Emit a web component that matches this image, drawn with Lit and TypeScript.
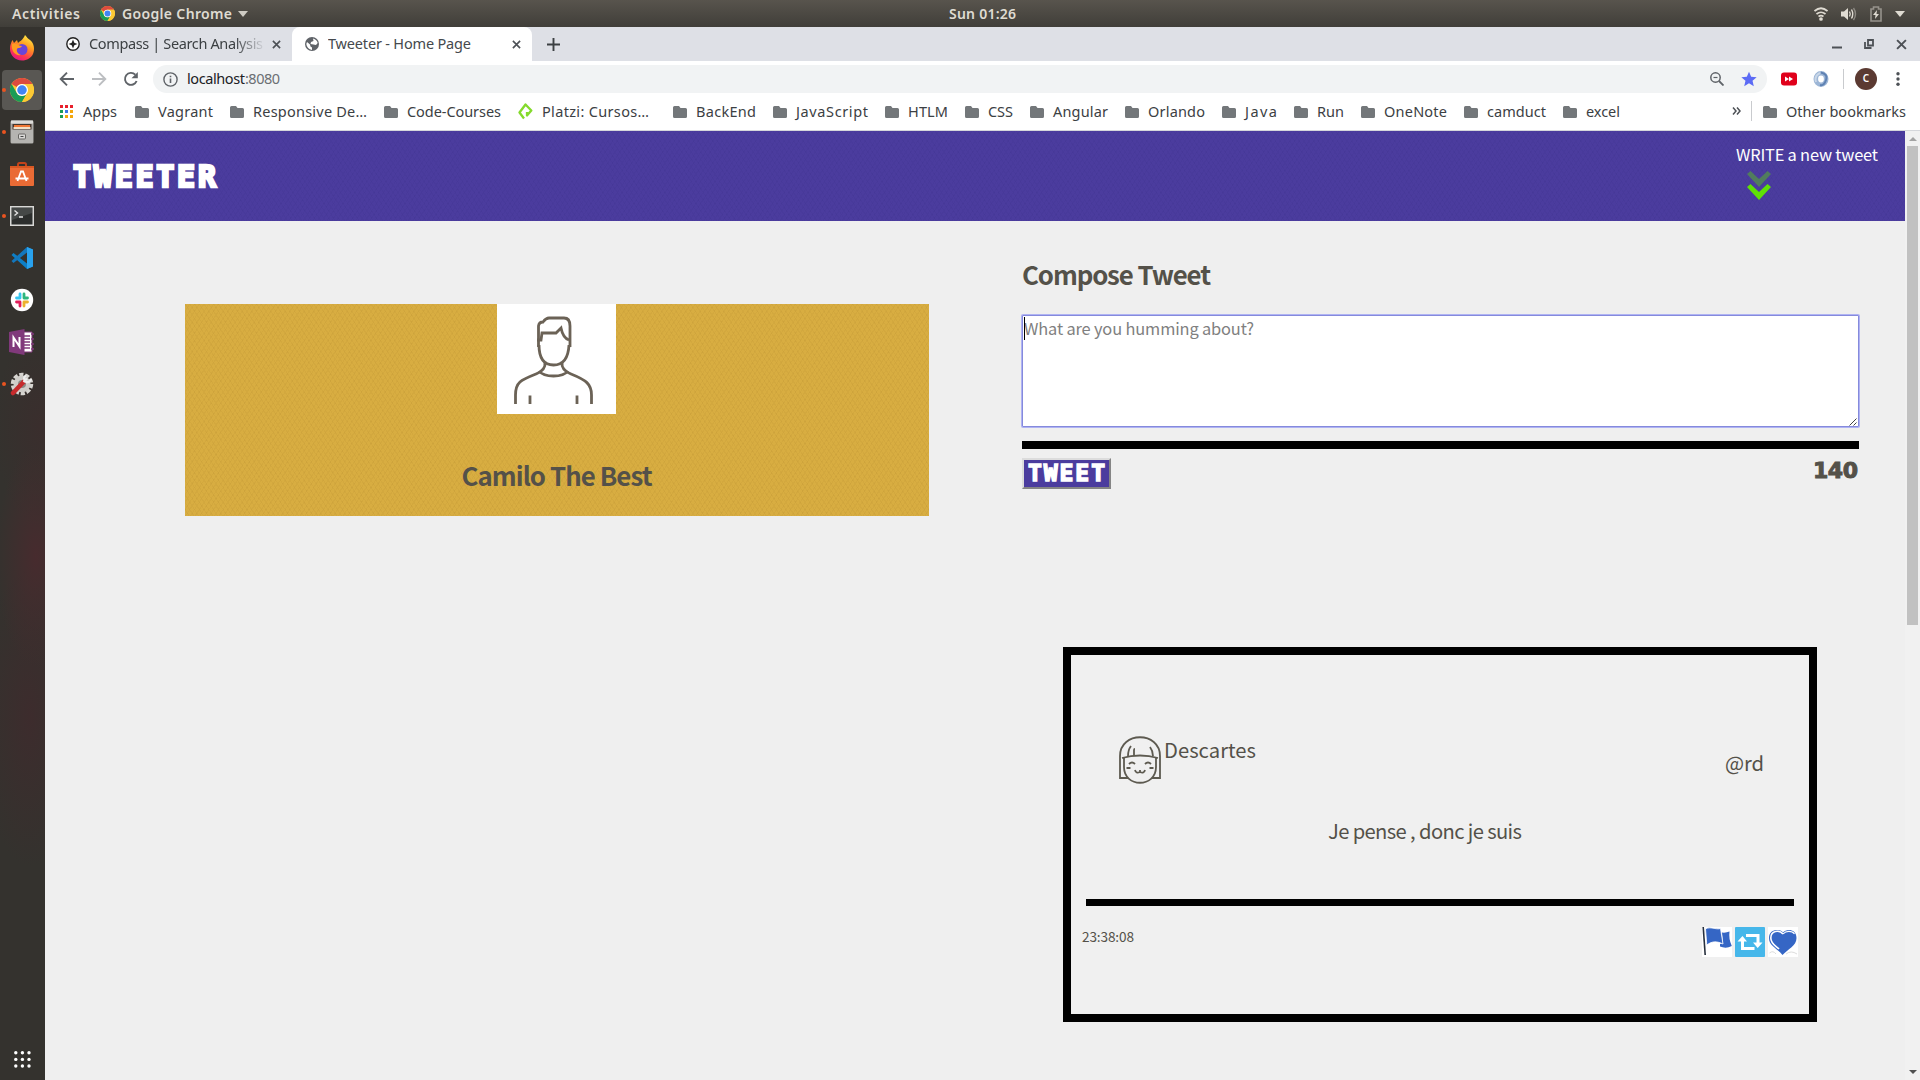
import { LitElement, html, css, svg } from "lit";
import { customElement, property } from "lit/decorators.js";

/** A single line of text whose tracking is adjusted to fill a given width. */
@customElement("fit-text")
class FitText extends LitElement {
  @property() text = "";
  @property({ type: Number }) w = 0;
  static styles = css`
    :host { display: block; white-space: nowrap; flex: none; }
    .line { display: inline-block; white-space: pre; }
  `;
  render() {
    return html`<span class="line">${this.text}</span>`;
  }
  updated() {
    const line = this.renderRoot.querySelector(".line") as HTMLElement;
    line.style.letterSpacing = "0px";
    const natural = line.getBoundingClientRect().width;
    const gaps = Math.max(1, this.text.length - 1);
    line.style.letterSpacing = `${(this.w - natural) / gaps}px`;
    this.style.width = `${this.w}px`;
  }
}

const chromeLogo = (size: number) => html`<svg width=${size} height=${size} viewBox="0 0 48 48">
  <circle cx="24" cy="24" r="24" fill="#fbc934" />
  <path d="M3.2 12A24 24 0 0 1 44.8 12H24A12 12 0 0 0 13.6 18Z" fill="#dd4b3e" />
  <path d="M3.2 12A24 24 0 0 0 24 48L34.4 30A12 12 0 0 1 13.6 30Z" fill="#1a9c57" />
  <path d="M24 12H44.8A24 24 0 0 1 24 48L34.4 30A12 12 0 0 0 24 12Z" fill="#fcc934" />
  <circle cx="24" cy="24" r="12" fill="#fff" />
  <circle cx="24" cy="24" r="9.5" fill="#4285f4" />
</svg>`;

const dock = [
  { dot: false, active: false, art: html`<svg width="26" height="26" viewBox="0 0 26 26">
    <defs>
      <linearGradient id="ff" x1=".8" y1="0" x2=".3" y2="1"><stop offset="0" stop-color="#fff14a" /><stop offset=".4" stop-color="#ff9a1f" /><stop offset=".75" stop-color="#ff3a4d" /><stop offset="1" stop-color="#e31587" /></linearGradient>
    </defs>
    <path d="M16 0C18 2 19 4 21 5C25 8 26 14 24 19C22 23 18 25.500 13 25.500C6 25.500 1 20 1 14C1 10 2 8 3.500 5L5 8L8 5L9 8C11 6 14 5 16 0Z" fill="url(#ff)" />
    <circle cx="13" cy="14.500" r="5.500" fill="#6a45d8" />
    <path d="M3 9C8 7 9 11 13 11C11 14 9 12 8 14C7 16 9 19 12 20C6 21 2 16 3 9Z" fill="#ff9d21" />
  </svg>` },
  { dot: true, active: true, art: chromeLogo(24) },
  { dot: true, active: false, art: html`<svg width="24" height="24" viewBox="0 0 24 24">
    <rect x=".5" y=".5" width="23" height="23" rx="1.500" fill="#aaa9a6" />
    <rect x="1" y=".5" width="22" height="3" fill="#dddcd9" />
    <rect x="2.500" y="4" width="19" height="6" fill="#46372e" />
    <rect x="4" y="5" width="16" height="2" fill="#f27835" /><rect x="3.500" y="7" width="17" height="2" fill="#f2dfc5" />
    <rect x="1" y="9.500" width="22" height="13.500" fill="#b5b4b1" />
    <rect x="8.500" y="14" width="7" height="5" rx="1" fill="#dad9d7" stroke="#686764" /><path d="M10.500 16.500h3" stroke="#444" />
  </svg>` },
  { dot: false, active: false, art: html`<svg width="26" height="26" viewBox="0 0 26 26">
    <path d="M9 6V3.500Q9 2 10.500 2h5Q17 2 17 3.500V6" fill="none" stroke="#c4431a" stroke-width="2" />
    <rect x="1" y="5" width="24" height="20" rx="1" fill="#ea6b35" /><path d="M1 5h24v2H1z" fill="#d95722" />
    <path d="M8.500 20L12 10.500h2L17.500 20M6.500 17.500h13" fill="none" stroke="#fff" stroke-width="1.800" />
  </svg>` },
  { dot: true, active: false, art: html`<svg width="24" height="20" viewBox="0 0 24 20">
    <rect x=".75" y=".75" width="22.500" height="18.500" fill="#2c2e2d" stroke="#d8d8d6" stroke-width="1.500" />
    <path d="M2 2h20v5L2 14z" fill="#454847" />
    <path d="M4.500 4.500l3 2.500-3 2.500M9 11h4" fill="none" stroke="#e4e4e4" stroke-width="1.400" />
  </svg>` },
  { dot: false, active: false, art: html`<svg width="24" height="24" viewBox="0 0 24 24">
    <path d="M17 1L23 3.500V20.500L17 23L1.500 9L3.500 7L17 17.500Z" fill="#0d7fc7" />
    <path d="M17 1L23 3.500V20.500L17 23Z" fill="#29a2ee" />
    <path d="M17 6.500L3.500 17L1.500 15L17 1Z" fill="#1377bd" />
  </svg>` },
  { dot: false, active: false, art: html`<svg width="24" height="24" viewBox="0 0 24 24">
    <circle cx="12" cy="12" r="11.200" fill="#fff" />
    <g fill="none" stroke-width="2.800" stroke-linecap="round">
      <path d="M10 6v4M6.500 10H10" stroke="#36c5f0" /><path d="M14 6v4M14 10h3.500" stroke="#2eb67d" />
      <path d="M14 14v4M14 14h3.500" stroke="#ecb22e" /><path d="M10 14v4M6.500 14H10" stroke="#e01e5a" />
    </g>
  </svg>` },
  { dot: false, active: false, art: html`<svg width="26" height="26" viewBox="0 0 26 26">
    <path d="M14 3h9v20h-9z" fill="#fff" stroke="#80397b" stroke-width="1" /><path d="M15 7h6M15 10h6M15 13h6M15 16h6M15 19h6M22 5h3M22 10h3M22 15h3M22 20h3" stroke="#80397b" stroke-width="1.300" />
    <path d="M0 3L15.500 0V26L0 23Z" fill="#80397b" /><path d="M4.500 18V8.500L10.500 17.500V8" fill="none" stroke="#fff" stroke-width="2" />
  </svg>` },
  { dot: true, active: false, art: html`<svg width="24" height="24" viewBox="0 0 24 24">
    <circle cx="12" cy="12" r="9.500" fill="none" stroke="#d7d5d1" stroke-width="3.500" stroke-dasharray="4.200 1.760" />
    <circle cx="12" cy="12" r="8.500" fill="#cfcdc9" /><circle cx="12" cy="12" r="4" fill="#8b8985" />
    <path d="M3 21L14 9.500" stroke="#c62b2d" stroke-width="4.500" stroke-linecap="round" />
    <path d="M13.500 10L17 6.500M16 3.500A3.500 3.500 0 1 0 21 7" fill="none" stroke="#eee" stroke-width="2.200" />
  </svg>` },
];

const bookmarks: [string, number][] = [
  ["Vagrant", 55], ["Responsive De…", 114], ["Code-Courses", 94], ["Platzi: Cursos…", 107],
  ["BackEnd", 60], ["JavaScript", 72], ["HTLM", 40], ["CSS", 25], ["Angular", 55], ["Orlando", 57],
  ["Java", 32], ["Run", 27], ["OneNote", 63], ["camduct", 59], ["excel", 34],
];

const folder = html`<svg class="folder" width="14" height="14" viewBox="0 0 14 14">
  <path d="M1.500 1H6L7.500 3H12.500Q14 3 14 4.500V11.500Q14 13 12.500 13H1.500Q0 13 0 11.500V2.500Q0 1 1.500 1Z" fill="#73777a" />
</svg>`;
const platzi = html`<svg width="15" height="17" viewBox="0 0 15 17">
  <path d="M6 15.500L1.500 9.500L7.500 1.500L13.300 7.500L9 12.500V9" fill="none" stroke="#84da2c" stroke-width="2.300" stroke-linejoin="round" />
</svg>`;
const cross = (s: number, w: number) => html`<svg width=${s} height=${s} viewBox="0 0 10 10"><path d="M1 1L9 9M9 1L1 9" stroke="#4d5156" stroke-width=${w} /></svg>`;
const dots = (gap: number, size: number, colors: string[]) => svg`${colors.map(
  (c, i) => svg`<rect x=${(i % 3) * gap} y=${Math.floor(i / 3) * gap} width=${size} height=${size} fill=${c} />`
)}`;

@customElement("app-root")
class AppRoot extends LitElement {
  static styles = css`
    :host { display: block; width: 1920px; height: 1080px; overflow: hidden; font-family: "Noto Sans", sans-serif; }
    * { box-sizing: border-box; }
    svg { display: block; flex: none; }
    .desktop { display: grid; grid-template-rows: 27px 1053px; height: 1080px; }

    .topbar { display: grid; grid-template-columns: 949px 1fr auto; align-items: center; background: linear-gradient(#58544d, #403e39); color: #dfdbd2; font-size: 14px; font-weight: 600; line-height: 26px; }
    .menus { display: flex; align-items: center; padding-left: 12px; }
    .menus svg:first-of-type { margin-left: 20px; margin-right: 7px; }
    .menus .caret { margin-left: 6px; }
    .tray { display: flex; align-items: center; padding-right: 15px; gap: 13px; }

    .below { display: grid; grid-template-columns: 45px 1875px; }
    .dock { display: flex; flex-direction: column; background: radial-gradient(40px 110px at 36px 530px, #472b2e, transparent), radial-gradient(50px 150px at 30px 690px, #3d2c2d, transparent), radial-gradient(45px 100px at 40px 400px, #3a2e2d, transparent), #34322e; }
    .slot { display: grid; grid-template-columns: 2px 40px; height: 42px; align-items: center; }
    .tile { display: flex; align-items: center; justify-content: center; height: 40px; border-radius: 4px; position: relative; }
    .tile.active { background: #595753; }
    .tile.dotted::before { content: ""; position: absolute; left: 0; top: 18px; width: 4px; height: 4px; border-radius: 2px; background: #e95420; }
    .launcher { margin: auto 0 12px 14px; }

    .window { display: grid; grid-template-columns: 1875px; grid-template-rows: 34px 36px 34px 949px; background: #fff; color: #3c4043; font-size: 14.500px; }
    .tabs { display: flex; background: #dee0e6; align-items: center; padding-right: 13px; }
    .tab { display: flex; align-items: center; height: 34px; padding-left: 21px; width: 247px; }
    .tab .title { margin-left: 9px; margin-bottom: 2px; width: 174px; overflow: hidden; }
    .tab .close { margin-left: 9px; }
    .fade { -webkit-mask-image: linear-gradient(90deg, #000 145px, transparent 177px); }
    .tab.current { width: 240px; background: #fff; border-radius: 8px 8px 0 0; padding-left: 13px; color: #45494d; }
    .tab.current .title { width: 184px; }
    .tab.current .close { margin-left: 0; }
    .plus { margin-left: 15px; }
    .controls { margin-left: auto; display: flex; gap: 22px; align-items: center; }

    .toolbar { display: flex; align-items: center; padding: 0 17px 0 14px; }
    .nav { display: flex; gap: 16px; width: 94px; flex: none; }
    .omnibox { display: flex; align-items: center; height: 28px; width: 1614px; flex: none; border-radius: 14px; background: #f1f3f4; padding: 0 10px; }
    .omnibox fit-text { margin-bottom: 2px; }
    .omnibox .host { margin-left: 9px; color: #202124; }
    .omnibox .port { color: #6b6f73; }
    .omnibox .tools { margin-left: auto; display: flex; gap: 17px; align-items: center; }
    .extensions { display: flex; align-items: center; margin-left: 14px; gap: 16px; }
    .rule { width: 1px; height: 20px; background: #c9cbce; }
    .extensions .rule { margin-left: -2px; margin-right: -5px; }
    .avatar { width: 22px; height: 22px; border-radius: 50%; background: #5b3a32; color: #fff; font: 600 10px/21px "Noto Sans", sans-serif; text-align: center; }
    .extensions .more { margin-left: -1px; }

    .bookmarks { display: flex; align-items: center; padding: 0 14px 5px 15px; border-bottom: 1px solid #d5d7db; }
    .bookmarks fit-text { margin-bottom: 1px; }
    .apps { display: flex; align-items: center; gap: 10px; margin-right: 18px; }
    .mark { display: flex; align-items: center; gap: 9px; margin-right: 17px; }
    .mark.wide { margin-right: 24px; }
    .mark svg.folder { margin-top: 1px; }
    .overflow { margin-left: auto; display: flex; align-items: center; gap: 10px; }
    .overflow .mark { margin: 0 0 0 1px; }

    .viewport { display: grid; grid-template-columns: 1860px 15px; overflow: hidden; }
    .page { background: #efefef; font-family: "Noto Sans CJK SC", sans-serif; color: #545149; }
    .site { height: 90px; display: flex; justify-content: space-between; padding: 0 27px 0 28px;
      background: repeating-linear-gradient(57deg, transparent 0 3px, rgba(35, 30, 110, 0.06) 3px 4px), repeating-linear-gradient(-57deg, transparent 0 3px, rgba(35, 30, 110, 0.06) 3px 4px), #4b3c9e; }
    .brand { font: 700 30px/92px "DejaVu Sans Mono", monospace; color: #fff; -webkit-text-stroke: 2.600px #fff; }
    .write { padding-top: 10px; font-size: 16.400px; line-height: 26px; color: #fff; width: 142px; }
    .write svg { margin: 4px 0 0 11px; }

    .columns { display: grid; grid-template-columns: 744px 837px; column-gap: 93px; padding-left: 140px; align-items: start; }
    .profile { margin-top: 83px; height: 212px; display: flex; flex-direction: column; align-items: center;
      background: repeating-linear-gradient(57deg, transparent 0 3px, rgba(150, 110, 30, 0.08) 3px 4px), repeating-linear-gradient(-57deg, transparent 0 3px, rgba(150, 110, 30, 0.08) 3px 4px), #d8ad41; }
    .photo { background: #fff; width: 119px; height: 110px; margin-right: 1px; }
    h1 { margin: 0; font-size: 25.800px; line-height: 40px; font-weight: 700; }
    .profile h1 { margin-top: 41px; }
    .compose { padding-top: 33px; }
    .field { position: relative; margin-top: 21px; height: 112px; background: #fff; border: 1px solid #858adc; box-shadow: 0 0 0 1px #afb3f3; border-radius: 1px; padding: 0 1px; color: #808080; font-size: 16.400px; line-height: 24px; }
    .cursor { position: absolute; left: 1px; top: 1px; width: 1px; height: 23px; background: #000; }
    .grip { position: absolute; right: 1px; bottom: 0; }
    .bar { margin-top: 14px; height: 8px; background: #000; }
    .actions { display: flex; justify-content: space-between; margin-top: 9px; height: 31px; }
    .send { width: 89px; height: 31px; border: 2px solid; border-color: #dcdcdc #858585 #858585 #dcdcdc; background: #4b3c9e; color: #fff; padding-left: 4px; font: 700 23px/27px "DejaVu Sans Mono", monospace; -webkit-text-stroke: 1.500px #fff; }
    .count { margin-right: 1px; font: 700 22px/25px "DejaVu Sans", sans-serif; -webkit-text-stroke: 1px #545149; }

    .tweet { margin: 158px 0 0 41px; width: 754px; height: 375px; border: 8px solid #000; display: flex; flex-direction: column; background: #f0f0f0; font-size: 20.200px; line-height: 30px; }
    .author { display: flex; margin: 81px 45px 0 48px; height: 65px; }
    .author .name { margin-left: 3px; margin-top: -1px; }
    .author .handle { margin-left: auto; margin-top: 12px; }
    .words { margin: 15px 0 0 257px; height: 30px; }
    .tweet .line { height: 7px; margin: 53px 15px 0; background: #000; }
    .foot { display: flex; justify-content: space-between; margin: 21px 11px 0; }
    .time { font-size: 13.600px; line-height: 18px; }
    .icons { display: flex; gap: 3px; }

    .scroll { background: #f1f1f1; display: flex; flex-direction: column; align-items: center; }
    .scroll svg:first-child { margin: 6px 0 5px; }
    .thumb { width: 11px; height: 479px; background: #c1c1c1; }
    .scroll svg:last-child { margin: auto 0 6px; }
  `;

  render() {
    return html`<div class="desktop">
      <div class="topbar">
        <div class="menus">
          <fit-text text="Activities" w="68"></fit-text>${chromeLogo(15)}
          <fit-text text="Google Chrome" w="110"></fit-text>
          <svg class="caret" width="10" height="6" viewBox="0 0 10 6"><path d="M0 0h10L5 6z" fill="#cfccc4" /></svg>
        </div>
        <fit-text text="Sun 01:26" w="67"></fit-text>
        <div class="tray">
          <svg width="14" height="14" viewBox="0 0 14 14" fill="none" stroke="#dfdbd2" stroke-width="1.700"><path d="M.5 4Q7-1.500 13.500 4M2.500 7Q7 3.500 11.500 7M4.500 9.500Q7 7.800 9.500 9.500" /><circle cx="7" cy="12" r="1" fill="#dfdbd2" /></svg>
          <svg width="16" height="14" viewBox="0 0 16 14" fill="none"><path d="M0 4.500h3L7 1v12L3 9.500H0z" fill="#dfdbd2" /><path d="M8.500 4.500Q10 7 8.500 9.500M10.500 2.500Q13 7 10.500 11.500" stroke="#dfdbd2" stroke-width="1.400" /><path d="M12.500 1Q16.500 7 12.500 13" stroke="#8b8881" stroke-width="1.400" /></svg>
          <svg width="12" height="16" viewBox="0 0 12 16"><path d="M1 3h2.500V1h5v2H11v12H1z" fill="none" stroke="#96938c" stroke-width="1.600" /><path d="M7 4L3 9h2.500L5 13l4-5H6.500z" fill="#dfdbd2" /></svg>
          <svg width="10" height="6" viewBox="0 0 10 6"><path d="M0 0h10L5 6z" fill="#dfdbd2" /></svg>
        </div>
      </div>
      <div class="below">
        <div class="dock">
          ${dock.map((d) => html`<div class="slot"><span></span><div class="tile ${d.active ? "active" : ""} ${d.dot ? "dotted" : ""}">${d.art}</div></div>`)}
          <svg class="launcher" width="17" height="17" viewBox="0 0 17 17" fill="#fff">${[0, 1, 2, 3, 4, 5, 6, 7, 8].map((i) => svg`<circle cx=${1.8 + (i % 3) * 6.6} cy=${1.8 + Math.floor(i / 3) * 6.6} r="1.700" />`)}</svg>
        </div>
        <div class="window">
          <div class="tabs">
            <div class="tab">
              <svg width="14" height="14" viewBox="0 0 14 14"><circle cx="7" cy="7" r="6.200" fill="#fff" stroke="#222" stroke-width="1.400" /><path d="M7 2.500L8.300 5.700L11.500 7L8.300 8.300L7 11.500L5.700 8.300L2.500 7L5.700 5.700Z" fill="#222" /></svg>
              <div class="title fade"><fit-text text="Compass | Search Analysis" w="174"></fit-text></div>
              <div class="close">${cross(9, 1.8)}</div>
            </div>
            <div class="tab current">
              <svg width="14" height="14" viewBox="0 0 14 14"><circle cx="7" cy="7" r="7" fill="#5f6368" /><path d="M2 5L5 7.500L5.500 9.500L7 10.500V13Q2 12 1.300 7ZM8 1.500Q12 2.500 12.700 6L11 8L8.500 7.500L5.500 7L6 5L8.500 4Z" fill="#fff" /></svg>
              <div class="title"><fit-text text="Tweeter - Home Page" w="143"></fit-text></div>
              <div class="close">${cross(9, 1.8)}</div>
            </div>
            <svg class="plus" width="13" height="13" viewBox="0 0 13 13"><path d="M6.500 0v13M0 6.500h13" stroke="#3c4043" stroke-width="1.900" /></svg>
            <div class="controls">
              <svg width="10" height="10" viewBox="0 0 10 10"><path d="M0 8.500h10" stroke="#4d5156" stroke-width="2" /></svg>
              <svg width="10" height="10" viewBox="0 0 10 10"><path d="M4 1h5v5.500H4zM1 3v6h6.500" fill="none" stroke="#4d5156" stroke-width="1.800" /></svg>
              ${cross(11, 1.8)}
            </div>
          </div>
          <div class="toolbar">
            <div class="nav">
              <svg width="16" height="16" viewBox="0 0 16 16"><path d="M15 8H2.500M8 1.700L1.700 8L8 14.300" fill="none" stroke="#5f6368" stroke-width="1.900" /></svg>
              <svg width="16" height="16" viewBox="0 0 16 16"><path d="M1 8H13.500M8 1.700L14.300 8L8 14.300" fill="none" stroke="#bcbec1" stroke-width="1.900" /></svg>
              <svg width="16" height="16" viewBox="0 0 16 16"><path d="M13.600 10A6 6 0 1 1 12.300 3.700" fill="none" stroke="#5f6368" stroke-width="1.900" /><path d="M14.800 1v6.300H8.500z" fill="#5f6368" /></svg>
            </div>
            <div class="omnibox">
              <svg width="15" height="15" viewBox="0 0 15 15"><circle cx="7.500" cy="7.500" r="6.600" fill="none" stroke="#5f6368" stroke-width="1.400" /><path d="M7.500 6.500v4.500M7.500 3.700v1.600" stroke="#5f6368" stroke-width="1.600" /></svg>
              <fit-text class="host" text="localhost" w="58"></fit-text><fit-text class="port" text=":8080" w="35"></fit-text>
              <div class="tools">
                <svg width="14" height="14" viewBox="0 0 14 14" fill="none" stroke="#5f6368"><circle cx="5.500" cy="5.500" r="4.700" stroke-width="1.500" /><path d="M9 9L13.500 13.500" stroke-width="1.800" /><path d="M3.500 5.500h4" stroke-width="1.200" /></svg>
                <svg width="16" height="16" viewBox="0 0 24 24"><path d="M12 1l3.300 7.600 8.200.7-6.200 5.400 1.900 8L12 18.500l-7.200 4.200 1.900-8L.5 9.300l8.200-.7z" fill="#5c6bf5" /></svg>
              </div>
            </div>
            <div class="extensions">
              <svg width="16" height="14" viewBox="0 0 16 14"><rect width="16" height="13" y=".5" rx="3" fill="#e0001b" /><path d="M4 4.500L8 7L4 9.500zM8 4.500L12 7L8 9.500z" fill="#fff" /></svg>
              <svg width="16" height="16" viewBox="0 0 16 16"><ellipse cx="8" cy="8" rx="5.200" ry="5.700" fill="none" stroke="#9db6d6" stroke-width="4.600" /><path d="M8 1.500Q15 3 13 9T7 14" fill="none" stroke="#5f82b3" stroke-width="2" /><path d="M3 11Q1 5 7 2" fill="none" stroke="#c9d7e8" stroke-width="2" /></svg>
              <div class="rule"></div>
              <div class="avatar">C</div>
              <svg class="more" width="8" height="16" viewBox="0 0 8 16" fill="#4d5156"><circle cx="6" cy="2.800" r="1.700" /><circle cx="6" cy="8" r="1.700" /><circle cx="6" cy="13.200" r="1.700" /></svg>
            </div>
          </div>
          <div class="bookmarks">
            <div class="apps">
              <svg width="13" height="13" viewBox="0 0 13 13">${dots(5, 3, ["#e8202c", "#e8202c", "#e8202c", "#1a9c57", "#3b78e7", "#f4a70b", "#1a9c57", "#f4a70b", "#f4a70b"])}</svg>
              <fit-text text="Apps" w="34"></fit-text>
            </div>
            ${bookmarks.map(([t, w]) => html`<div class="mark ${t.startsWith("Platzi") ? "wide" : ""}">${t.startsWith("Platzi") ? platzi : folder}<fit-text text=${t} w=${w}></fit-text></div>`)}
            <div class="overflow">
              <svg width="9" height="8" viewBox="0 0 9 8"><path d="M1 .5L4 4L1 7.500M5 .5L8 4L5 7.500" fill="none" stroke="#4d5156" stroke-width="1.500" /></svg>
              <div class="rule"></div>
              <div class="mark">${folder}<fit-text text="Other bookmarks" w="120"></fit-text></div>
            </div>
          </div>
          <div class="viewport">
            <div class="page">
              <div class="site">
                <fit-text class="brand" text="TWEETER" w="143"></fit-text>
                <div class="write">
                  <fit-text text="WRITE a new tweet" w="142"></fit-text>
                  <svg width="24" height="29" viewBox="0 0 24 29"><path d="M0 3L3.500 0L12 8L20.500 0L24 3L12 16Z" fill="#517c5d" /><path d="M0 16L3.500 13L12 21L20.500 13L24 16L12 29Z" fill="#5fe005" /></svg>
                </div>
              </div>
              <div class="columns">
                <div class="profile">
                  <div class="photo">
                    <svg width="119" height="110" viewBox="0 0 119 110" fill="none" stroke="#6b6256" stroke-width="2.800">
                      <path d="M41.500 43V22Q42 18 46 18Q49 14 52 14H67Q73 14 73 22V43" />
                      <path d="M40 36H44L45 29H59L64 24Q66 34 72 36" />
                      <path d="M42 41Q42 61 56.500 61Q71 61 72 41" />
                      <path d="M48 58Q49 66 39 70C24 76 18.500 78 18.500 91V100M65 58Q64 66 74 70C89 76 94.500 80 94.500 91V100" />
                      <path d="M42 67Q46 72 56.500 72T71 67M33 91.500V100M80 91.500V100" />
                    </svg>
                  </div>
                  <h1><fit-text text="Camilo The Best" w="191"></fit-text></h1>
                </div>
                <div class="compose">
                  <h1><fit-text text="Compose Tweet" w="189"></fit-text></h1>
                  <div class="field"><fit-text text="What are you humming about?" w="230"></fit-text><span class="cursor"></span>
                    <svg class="grip" width="8" height="8" viewBox="0 0 8 8"><path d="M.5 7.500L7.500 .5M4.500 7.500L7.500 4.500" stroke="#444" /></svg>
                  </div>
                  <div class="bar"></div>
                  <div class="actions">
                    <div class="send"><fit-text text="TWEET" w="77"></fit-text></div>
                    <fit-text class="count" text="140" w="45"></fit-text>
                  </div>
                  <div class="tweet">
                    <div class="author">
                      <svg width="42" height="48" viewBox="0 0 42 48" fill="none" stroke="#5d5a50" stroke-width="1.800">
                        <path d="M9 42H1V20C1-5 41-5 41 20V42H33" />
                        <path d="M3 22Q21 17 39 22M5 22V31C5 52 37 52 37 31V22" />
                        <path d="M9 20Q9 14 12 10M15 20V14Q15 13 16 13M31 11Q34 15 34 20" />
                        <path d="M10 28Q13 25 16 28M26 28Q29 25 32 28M7.500 32H11.500M30.500 32H34.500M16 34Q17 38 21 36Q25 38 26 34M21 34V36" />
                      </svg>
                      <fit-text class="name" text="Descartes" w="92"></fit-text>
                      <fit-text class="handle" text="@rd" w="39"></fit-text>
                    </div>
                    <div class="words"><fit-text text="Je pense , donc je suis" w="194"></fit-text></div>
                    <div class="line"></div>
                    <div class="foot">
                      <fit-text class="time" text="23:38:08" w="52"></fit-text>
                      <div class="icons">
                        <svg width="30" height="30" viewBox="0 0 30 30"><rect width="30" height="30" fill="#fff" /><path d="M1.200 0L3.200 28" stroke="#27303d" stroke-width="1.600" /><path d="M20 5.500Q24 6 27.500 4.500Q26.500 12 29.800 19Q24 22 18 19.500V17L21 16Z" fill="#3566c5" /><path d="M3.500 2C8-1 14 3 18.500 1.500L21 17C15 14 10 14 4.800 18Z" fill="#3566c5" stroke="#fff" stroke-width=".8" /></svg>
                        <svg width="30" height="30" viewBox="0 0 30 30"><rect width="30" height="30" rx="1" fill="#46b7ea" /><g fill="none" stroke="#fff" stroke-width="3"><path d="M7.500 13V21.500H19.500M11 8.500H23V17" /></g><path d="M2.500 14.500L7.500 9L12 14.500ZM18 15.500H27.500L22.700 21Z" fill="#fff" /></svg>
                        <svg width="30" height="30" viewBox="0 0 30 30"><rect width="30" height="30" fill="#fff" /><path d="M1.500 26Q5 23 8 27M18 27Q23 23 29 27" stroke="#ddd" fill="none" /><path d="M15 5.500C12 1.500 1 1.500 1 11C1 19 9 21 14.500 28C20 22 28.500 19 28.500 11C28.500 1.500 18 1.500 15 5.500Z" fill="#3566c5" /><path d="M15 7C11 2.500 2.800 3.500 2.800 11C2.800 17 8 19 11 22" fill="none" stroke="#fff" stroke-width="1.600" /><path d="M15 7C18 3.500 24 3.500 26.500 7" fill="none" stroke="#fff" stroke-width="1.100" /></svg>
                      </div>
                    </div>
                  </div>
                </div>
              </div>
            </div>
            <div class="scroll">
              <svg width="8" height="4" viewBox="0 0 8 4"><path d="M0 4h8L4 0z" fill="#a3a3a3" /></svg>
              <div class="thumb"></div>
              <svg width="8" height="4" viewBox="0 0 8 4"><path d="M0 0h8L4 4z" fill="#505050" /></svg>
            </div>
          </div>
        </div>
      </div>
    </div>`;
  }
}
